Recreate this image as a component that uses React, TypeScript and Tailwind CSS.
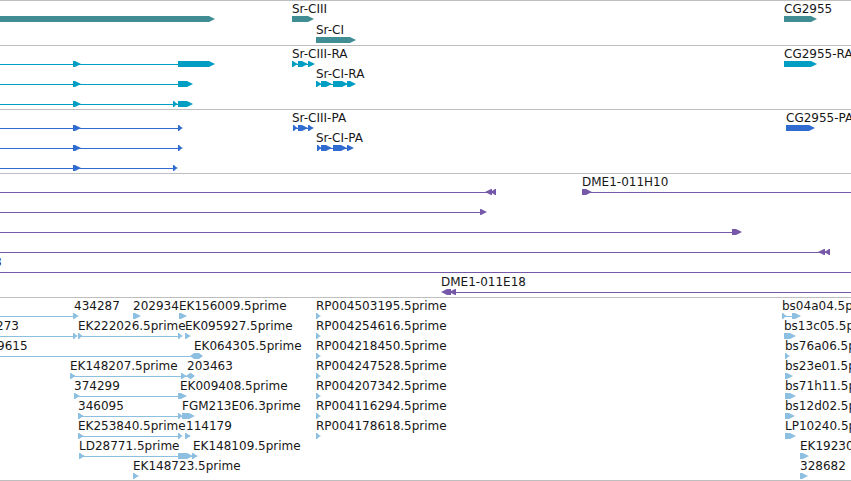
import { clsx } from "clsx"

type Direction = "right" | "left" | "both"

interface Feature {
  label?: string
  labelX?: number
  exons: [number, number][]
  // intron line, when the feature runs past its exons
  line?: [number, number]
  dir?: Direction
}

interface Track {
  name: string
  color: string
  spacing: string
  lanes: Feature[][]
}

const TRACKS: Track[] = [
  {
    name: "Genes",
    color: "text-[#408e94]",
    spacing: "gap-px pb-0.5",
    lanes: [
      [
        { exons: [[-20, 215]] },
        { label: "Sr-CIII", labelX: 292, exons: [[292, 314]] },
        { label: "CG2955", labelX: 784, exons: [[784, 817]] },
      ],
      [{ label: "Sr-CI", labelX: 316, exons: [[316, 356]] }],
    ],
  },
  {
    name: "Transcripts",
    color: "text-[#009ec2]",
    spacing: "pb-0.5",
    lanes: [
      [
        { exons: [[73, 81], [178, 215]], line: [0, 178] },
        { label: "Sr-CIII-RA", labelX: 292, exons: [[292, 298], [298, 308], [308, 315]], line: [292, 312] },
        { label: "CG2955-RA", labelX: 784, exons: [[784, 817]] },
      ],
      [
        { exons: [[73, 81], [178, 193]], line: [0, 178] },
        { label: "Sr-CI-RA", labelX: 316, exons: [[316, 322], [321, 332], [333, 348], [347, 356]], line: [316, 350] },
      ],
      [{ exons: [[73, 81], [173, 178], [178, 193]], line: [0, 178] }],
    ],
  },
  {
    name: "Proteins",
    color: "text-[#306ccf]",
    spacing: "pb-0.5",
    lanes: [
      [
        { exons: [[73, 81], [178, 183]], line: [0, 178] },
        { label: "Sr-CIII-PA", labelX: 292, exons: [[293, 298], [298, 308], [308, 314]], line: [293, 310] },
        { label: "CG2955-PA", labelX: 786, exons: [[786, 815]] },
      ],
      [
        { exons: [[73, 81], [178, 183]], line: [0, 178] },
        { label: "Sr-CI-PA", labelX: 316, exons: [[317, 322], [321, 332], [333, 347], [347, 354]], line: [317, 350] },
      ],
      [{ exons: [[73, 81], [173, 178]], line: [0, 173] }],
    ],
  },
  {
    name: "Clones",
    color: "text-[#7558a8]",
    spacing: "pb-0.5",
    lanes: [
      [
        { exons: [[485, 492], [490, 496]], line: [0, 492], dir: "left" },
        { label: "DME1-011H10", labelX: 582, exons: [[582, 592]], line: [582, 4000] },
      ],
      [{ exons: [[480, 487]], line: [0, 480] }],
      [{ exons: [[732, 742]], line: [0, 732] }],
      [{ exons: [[818, 825], [824, 830]], line: [0, 826], dir: "left" }],
      [{ label: "8", labelX: -6, exons: [], line: [0, 4000] }],
      [{ label: "DME1-011E18", labelX: 441, exons: [[441, 451], [449, 456]], line: [450, 4000], dir: "left" }],
    ],
  },
  {
    name: "ESTs",
    color: "text-[#8cbfe0]",
    spacing: "pb-px",
    lanes: [
      [
        { label: "434287", labelX: 74, exons: [[73, 79]], line: [0, 73] },
        { label: "202934", labelX: 133, exons: [[133, 141]] },
        { label: "EK156009.5prime", labelX: 179, exons: [[179, 187]] },
        { label: "RP004503195.5prime", labelX: 316, exons: [[316, 321]] },
        { label: "bs04a04.5prime", labelX: 782, exons: [[782, 787], [792, 801]], line: [782, 792] },
      ],
      [
        { label: "273", labelX: -4, exons: [[73, 78]], line: [0, 73] },
        { label: "EK222026.5prime", labelX: 78, exons: [[78, 83], [178, 183]], line: [78, 178] },
        { label: "EK095927.5prime", labelX: 185, exons: [[185, 191]] },
        { label: "RP004254616.5prime", labelX: 316, exons: [[316, 321]] },
        { label: "bs13c05.5prime", labelX: 784, exons: [[784, 796]] },
      ],
      [
        { label: "9615", labelX: -3, exons: [], line: [0, 192] },
        { label: "EK064305.5prime", labelX: 194, exons: [[190, 203]], dir: "both" },
        { label: "RP004218450.5prime", labelX: 316, exons: [[316, 321]] },
        { label: "bs76a06.5prime", labelX: 785, exons: [[785, 790]] },
      ],
      [
        { label: "EK148207.5prime", labelX: 70, exons: [[70, 76], [181, 187]], line: [70, 187] },
        { label: "203463", labelX: 187, exons: [[186, 195]], dir: "both" },
        { label: "RP004247528.5prime", labelX: 316, exons: [[316, 321]] },
        { label: "bs23e01.5prime", labelX: 785, exons: [[785, 793]] },
      ],
      [
        { label: "374299", labelX: 74, exons: [[74, 80], [178, 187]], line: [74, 178] },
        { label: "EK009408.5prime", labelX: 180, exons: [] },
        { label: "RP004207342.5prime", labelX: 316, exons: [[316, 321]] },
        { label: "bs71h11.5prime", labelX: 785, exons: [[785, 796]] },
      ],
      [
        { label: "346095", labelX: 78, exons: [[78, 84], [178, 183]], line: [78, 183] },
        { label: "FGM213E06.3prime", labelX: 182, exons: [[182, 195]] },
        { label: "RP004116294.5prime", labelX: 316, exons: [[316, 321]] },
        { label: "bs12d02.5prime", labelX: 785, exons: [[785, 795]] },
      ],
      [
        { label: "EK253840.5prime", labelX: 78, exons: [[78, 84], [178, 183]], line: [78, 178] },
        { label: "114179", labelX: 186, exons: [[185, 191]] },
        { label: "RP004178618.5prime", labelX: 316, exons: [[316, 321]] },
        { label: "LP10240.5prime", labelX: 785, exons: [[785, 796]] },
      ],
      [
        { label: "LD28771.5prime", labelX: 79, exons: [[79, 85], [178, 193]], line: [79, 193] },
        { label: "EK148109.5prime", labelX: 193, exons: [[192, 198]] },
        { label: "EK19230", labelX: 800, exons: [[800, 809]] },
      ],
      [
        { label: "EK148723.5prime", labelX: 133, exons: [[133, 139]] },
        { label: "328682", labelX: 800, exons: [[800, 808]] },
      ],
    ],
  },
]

function exonPoints(start: number, end: number, dir: Direction) {
  if (dir === "left") {
    const neck = Math.min(start + 6, end - 1)
    return `${end},0 ${neck},0 ${start + 2},2 ${start},3 ${start + 2},4 ${neck},6 ${end},6`
  }
  if (dir === "both") {
    return `${start},3 ${start + 4},0 ${end - 4},0 ${end},3 ${end - 4},6 ${start + 4},6`
  }
  const neck = Math.max(end - 6, start + 1)
  return `${start},0 ${neck},0 ${end - 2},2 ${end},3 ${end - 2},4 ${neck},6 ${start},6`
}

function FeatureShape({ feature }: { feature: Feature }) {
  const { exons, line, dir = "right" } = feature

  return (
    <g>
      {line && <rect x={line[0]} y={3} width={line[1] - line[0]} height={1} />}
      {exons.map(([start, end]) => (
        <polygon key={start} points={exonPoints(start, end, dir)} />
      ))}
    </g>
  )
}

function Lane({ features }: { features: Feature[] }) {
  return (
    <div className="flex flex-col">
      <div className="relative h-[14px] text-xs leading-[14px] text-neutral-900">
        {features.map(
          (feature) =>
            feature.label && (
              <span
                key={feature.label}
                className="absolute top-0 whitespace-nowrap"
                style={{ left: feature.labelX }}
              >
                {feature.label}
              </span>
            )
        )}
      </div>
      <svg className="block h-1.5 w-full fill-current" aria-hidden="true">
        {features.map((feature, i) => (
          <FeatureShape key={i} feature={feature} />
        ))}
      </svg>
    </div>
  )
}

export default function App() {
  return (
    <main className="w-full overflow-hidden border-b border-[#bebebe] bg-white font-['DejaVu_Sans',sans-serif]">
      {TRACKS.map((track) => (
        <section
          key={track.name}
          aria-label={track.name}
          className={clsx("flex flex-col border-t border-[#bebebe] pt-px", track.color, track.spacing)}
        >
          {track.lanes.map((features, i) => (
            <Lane key={i} features={features} />
          ))}
        </section>
      ))}
    </main>
  )
}
